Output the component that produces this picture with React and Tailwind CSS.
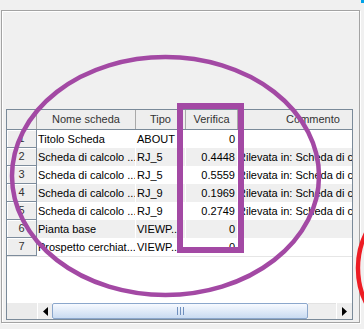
const rows = [
  { n: 1, nome: 'Titolo Scheda', tipo: 'ABOUT', ver: '0', com: '' },
  { n: 2, nome: 'Scheda di calcolo ...', tipo: 'RJ_5', ver: '0.4448', com: 'Rilevata in: Scheda di calcolo' },
  { n: 3, nome: 'Scheda di calcolo ...', tipo: 'RJ_5', ver: '0.5559', com: 'Rilevata in: Scheda di calcolo' },
  { n: 4, nome: 'Scheda di calcolo ...', tipo: 'RJ_9', ver: '0.1969', com: 'Rilevata in: Scheda di calcolo' },
  { n: 5, nome: 'Scheda di calcolo ...', tipo: 'RJ_9', ver: '0.2749', com: 'Rilevata in: Scheda di calcolo' },
  { n: 6, nome: 'Pianta base', tipo: 'VIEWP...', ver: '0', com: '' },
  { n: 7, nome: 'Prospetto cerchiat...', tipo: 'VIEWP...', ver: '0', com: '' },
];

function ArrowLeft() {
  return (
    <svg width="5" height="9" viewBox="0 0 5 9">
      <path d="M5 0 L0 4.5 L5 9 Z" fill="#000" />
    </svg>
  );
}

function ArrowRight() {
  return (
    <svg width="5" height="9" viewBox="0 0 5 9">
      <path d="M0 0 L5 4.5 L0 9 Z" fill="#000" />
    </svg>
  );
}

export default function App() {
  return (
    <div
      className="relative w-[364px] h-[329px] bg-[#f0f0f0] overflow-hidden pt-[10px] pl-[1px] text-[11px] text-black"
      style={{ fontFamily: '"Liberation Sans", Arial, sans-serif' }}
    >
      {/* etched panel */}
      <div className="w-[359px] h-[313px] border border-[#a3a3a3] shadow-[inset_1px_1px_0_#ffffff,1px_1px_0_#ffffff] pt-[98px] pl-[4px]">
        {/* scroll pane */}
        <div className="w-[347px] h-[211px] border border-[#7a8a99] bg-white flex flex-col overflow-hidden">
          {/* header */}
          <div className="flex h-[20px] shrink-0 border-b border-[#7a8a99] bg-[#eeeeee] text-[#333] whitespace-nowrap">
            <div className="w-[30px] shrink-0 border-r border-[#a9a9a9]" />
            <div className="w-[99px] shrink-0 border-r border-[#a9a9a9] flex items-center justify-center">Nome scheda</div>
            <div className="w-[50px] shrink-0 border-r border-[#a9a9a9] flex items-center justify-center">Tipo</div>
            <div className="w-[52px] shrink-0 border-r border-[#a9a9a9] flex items-center justify-center">Verifica</div>
            <div className="w-[150px] shrink-0 flex items-center justify-center">Commento</div>
          </div>

          {/* rows */}
          {rows.map((r, i) => (
            <div
              key={r.n}
              className={`flex h-[18px] shrink-0 whitespace-nowrap ${i % 2 === 1 ? 'bg-[#efefef]' : 'bg-white'}`}
            >
              <div className="w-[30px] shrink-0 h-full bg-[#eeeeee] border-r border-b border-[#7d8c9c] shadow-[inset_1px_1px_0_#ffffff] flex items-center justify-center text-[#333]">
                {r.n}
              </div>
              <div className="w-[99px] shrink-0 border-r border-white flex items-center pl-[1px] overflow-hidden">{r.nome}</div>
              <div className="w-[50px] shrink-0 border-r border-white flex items-center pl-[1px] overflow-hidden">{r.tipo}</div>
              <div className="w-[52px] shrink-0 border-r border-white flex items-center justify-end pr-[2px]">{r.ver}</div>
              <div className="w-[150px] shrink-0 flex items-center overflow-hidden">{r.com}</div>
            </div>
          ))}

          {/* empty area */}
          <div className="flex-1 border-t border-[#e6e6e6]" />

          {/* horizontal scrollbar */}
          <div className="flex h-[16px] shrink-0">
            <div className="w-[30px] shrink-0 bg-[#ebebeb]" />
            <div className="w-[15px] shrink-0 bg-[#eeeeee] border-l border-white flex items-center justify-center">
              <ArrowLeft />
            </div>
            <div className="w-[256px] shrink-0 rounded-[2px] border border-[#8ba7cc] bg-gradient-to-b from-[#f7faff] to-[#c9dbf1] flex items-center justify-center gap-[2px]">
              <div className="w-px h-[8px] bg-[#6f8fbd]" />
              <div className="w-px h-[8px] bg-[#6f8fbd]" />
              <div className="w-px h-[8px] bg-[#6f8fbd]" />
            </div>
            <div className="w-[28px] shrink-0 bg-[#eeeeee] border-t border-[#e2e2e2]" />
            <div className="w-[16px] shrink-0 bg-[#eeeeee] border-l border-white flex items-center justify-center">
              <ArrowRight />
            </div>
          </div>
        </div>
      </div>

      {/* annotations drawn over the screenshot */}
      <svg className="absolute left-0 top-0 pointer-events-none" width="364" height="329" viewBox="0 0 364 329">
        <ellipse cx="165.5" cy="176" rx="153.5" ry="119" fill="none" stroke="#a349a4" strokeWidth="4.5" />
        <rect x="180" y="106" width="61" height="144" fill="none" stroke="#a349a4" strokeWidth="6" />
        <ellipse cx="420" cy="268" rx="62" ry="70" fill="none" stroke="#ed1c24" strokeWidth="4.5" />
        <rect x="361" y="0" width="3" height="3" fill="#00a2e8" />
      </svg>
    </div>
  );
}
